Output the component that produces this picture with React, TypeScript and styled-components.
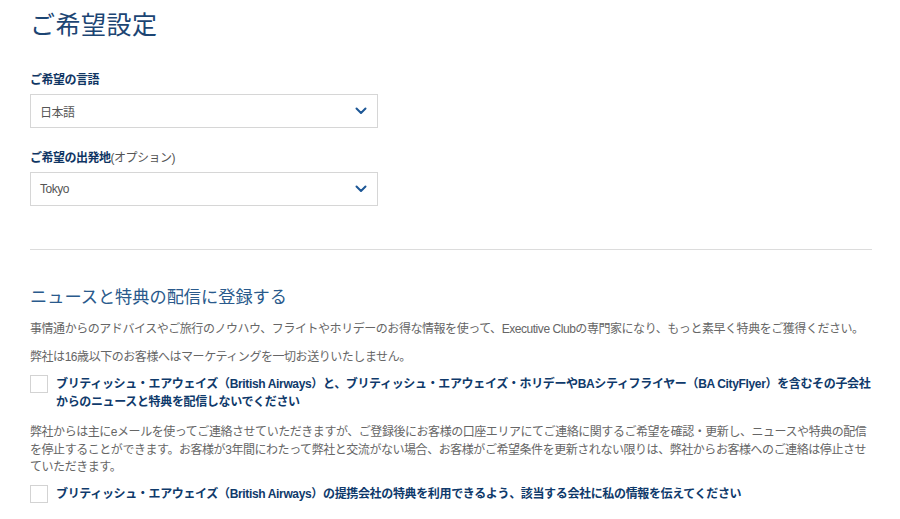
import React from "react";
import styled, { createGlobalStyle } from "styled-components";

const Global = createGlobalStyle`
  html, body { margin: 0; padding: 0; background: #fff; }
  body { font-family: "Liberation Sans", Arial, "Noto Sans CJK JP", sans-serif; }
  * { box-sizing: border-box; }
`;

const Page = styled.div`
  width: 900px;
  padding: 9px 28px 0 30px;
`;

const Title = styled.h1`
  margin: 0;
  font-size: 25px;
  font-weight: 400;
  color: #1c4573;
  line-height: 32px;
  letter-spacing: 0.5px;
`;

const Form = styled.div`
  display: flex;
  flex-direction: column;
  margin-top: 31px;
  width: 348px;
`;

const Field = styled.div`
  display: flex;
  flex-direction: column;
  gap: 6px;
  margin-bottom: 22px;
`;

const Label = styled.label`
  font-size: 12px;
  font-weight: 700;
  color: #0f3563;
  line-height: 16px;
  letter-spacing: -0.5px;
`;

const Optional = styled.span`
  font-weight: 400;
  color: #555;
`;

const Select = styled.div`
  height: 34px;
  border: 1px solid #d6d6d6;
  display: flex;
  align-items: center;
  justify-content: space-between;
  padding: 0 10px 0 9px;
  font-size: 12px;
  color: #555;
  letter-spacing: -0.5px;
`;

const Chevron = () => (
  <svg width="12" height="8" viewBox="0 0 12 8">
    <path d="M1.5 1.5 L6 6 L10.5 1.5" fill="none" stroke="#1d5796" strokeWidth="2" strokeLinecap="round" strokeLinejoin="round" />
  </svg>
);

const Divider = styled.hr`
  border: none;
  border-top: 1px solid #dcdcdc;
  margin: 21px 0 0 0;
  width: 842px;
`;

const Heading = styled.h2`
  margin: 35px 0 0 0;
  font-size: 17.2px;
  font-weight: 400;
  color: #2a5a8c;
  line-height: 24px;
`;

const Para = styled.p<{ $top?: number }>`
  margin: ${(p) => p.$top ?? 0}px 0 0 0;
  font-size: 12px;
  color: #666;
  line-height: 17.5px;
  letter-spacing: -0.45px;
`;

const Stack = styled.div`
  display: flex;
  flex-direction: column;
  gap: 10px;
  margin-top: 11px;
  width: 842px;
`;

const CheckRow = styled.div<{ $top?: number }>`
  display: flex;
  gap: 8px;
  align-items: flex-start;
  margin-top: ${(p) => p.$top ?? 0}px;
`;

const Box = styled.span`
  flex: 0 0 18px;
  width: 18px;
  height: 18px;
  border: 1px solid #d3d3d3;
  background: #fff;
`;

const CheckLabel = styled.span`
  font-size: 12px;
  font-weight: 700;
  color: #0f3a6b;
  line-height: 18px;
  letter-spacing: -0.35px;
`;

export default function App() {
  return (
    <Page>
      <Global />
      <Title>ご希望設定</Title>
      <Form>
        <Field>
          <Label>ご希望の言語</Label>
          <Select>
            <span>日本語</span>
            <Chevron />
          </Select>
        </Field>
        <Field>
          <Label>
            ご希望の出発地<Optional>(オプション)</Optional>
          </Label>
          <Select>
            <span>Tokyo</span>
            <Chevron />
          </Select>
        </Field>
      </Form>
      <Divider />
      <Heading>ニュースと特典の配信に登録する</Heading>
      <Stack>
        <Para $top={1}>
          事情通からのアドバイスやご旅行のノウハウ、フライトやホリデーのお得な情報を使って、Executive Clubの専門家になり、もっと素早く特典をご獲得ください。
        </Para>
        <Para>弊社は16歳以下のお客様へはマーケティングを一切お送りいたしません。</Para>
        <CheckRow $top={-1}>
          <Box />
          <CheckLabel>
            ブリティッシュ・エアウェイズ（British Airways）と、ブリティッシュ・エアウェイズ・ホリデーやBAシティフライヤー（BA CityFlyer）を含むその子会社からのニュースと特典を配信しないでください
          </CheckLabel>
        </CheckRow>
        <Para $top={3}>
          弊社からは主にeメールを使ってご連絡させていただきますが、ご登録後にお客様の口座エリアにてご連絡に関するご希望を確認・更新し、ニュースや特典の配信を停止することができます。お客様が3年間にわたって弊社と交流がない場合、お客様がご希望条件を更新されない限りは、弊社からお客様へのご連絡は停止させていただきます。
        </Para>
        <CheckRow $top={-2}>
          <Box />
          <CheckLabel>
            ブリティッシュ・エアウェイズ（British Airways）の提携会社の特典を利用できるよう、該当する会社に私の情報を伝えてください
          </CheckLabel>
        </CheckRow>
      </Stack>
    </Page>
  );
}
